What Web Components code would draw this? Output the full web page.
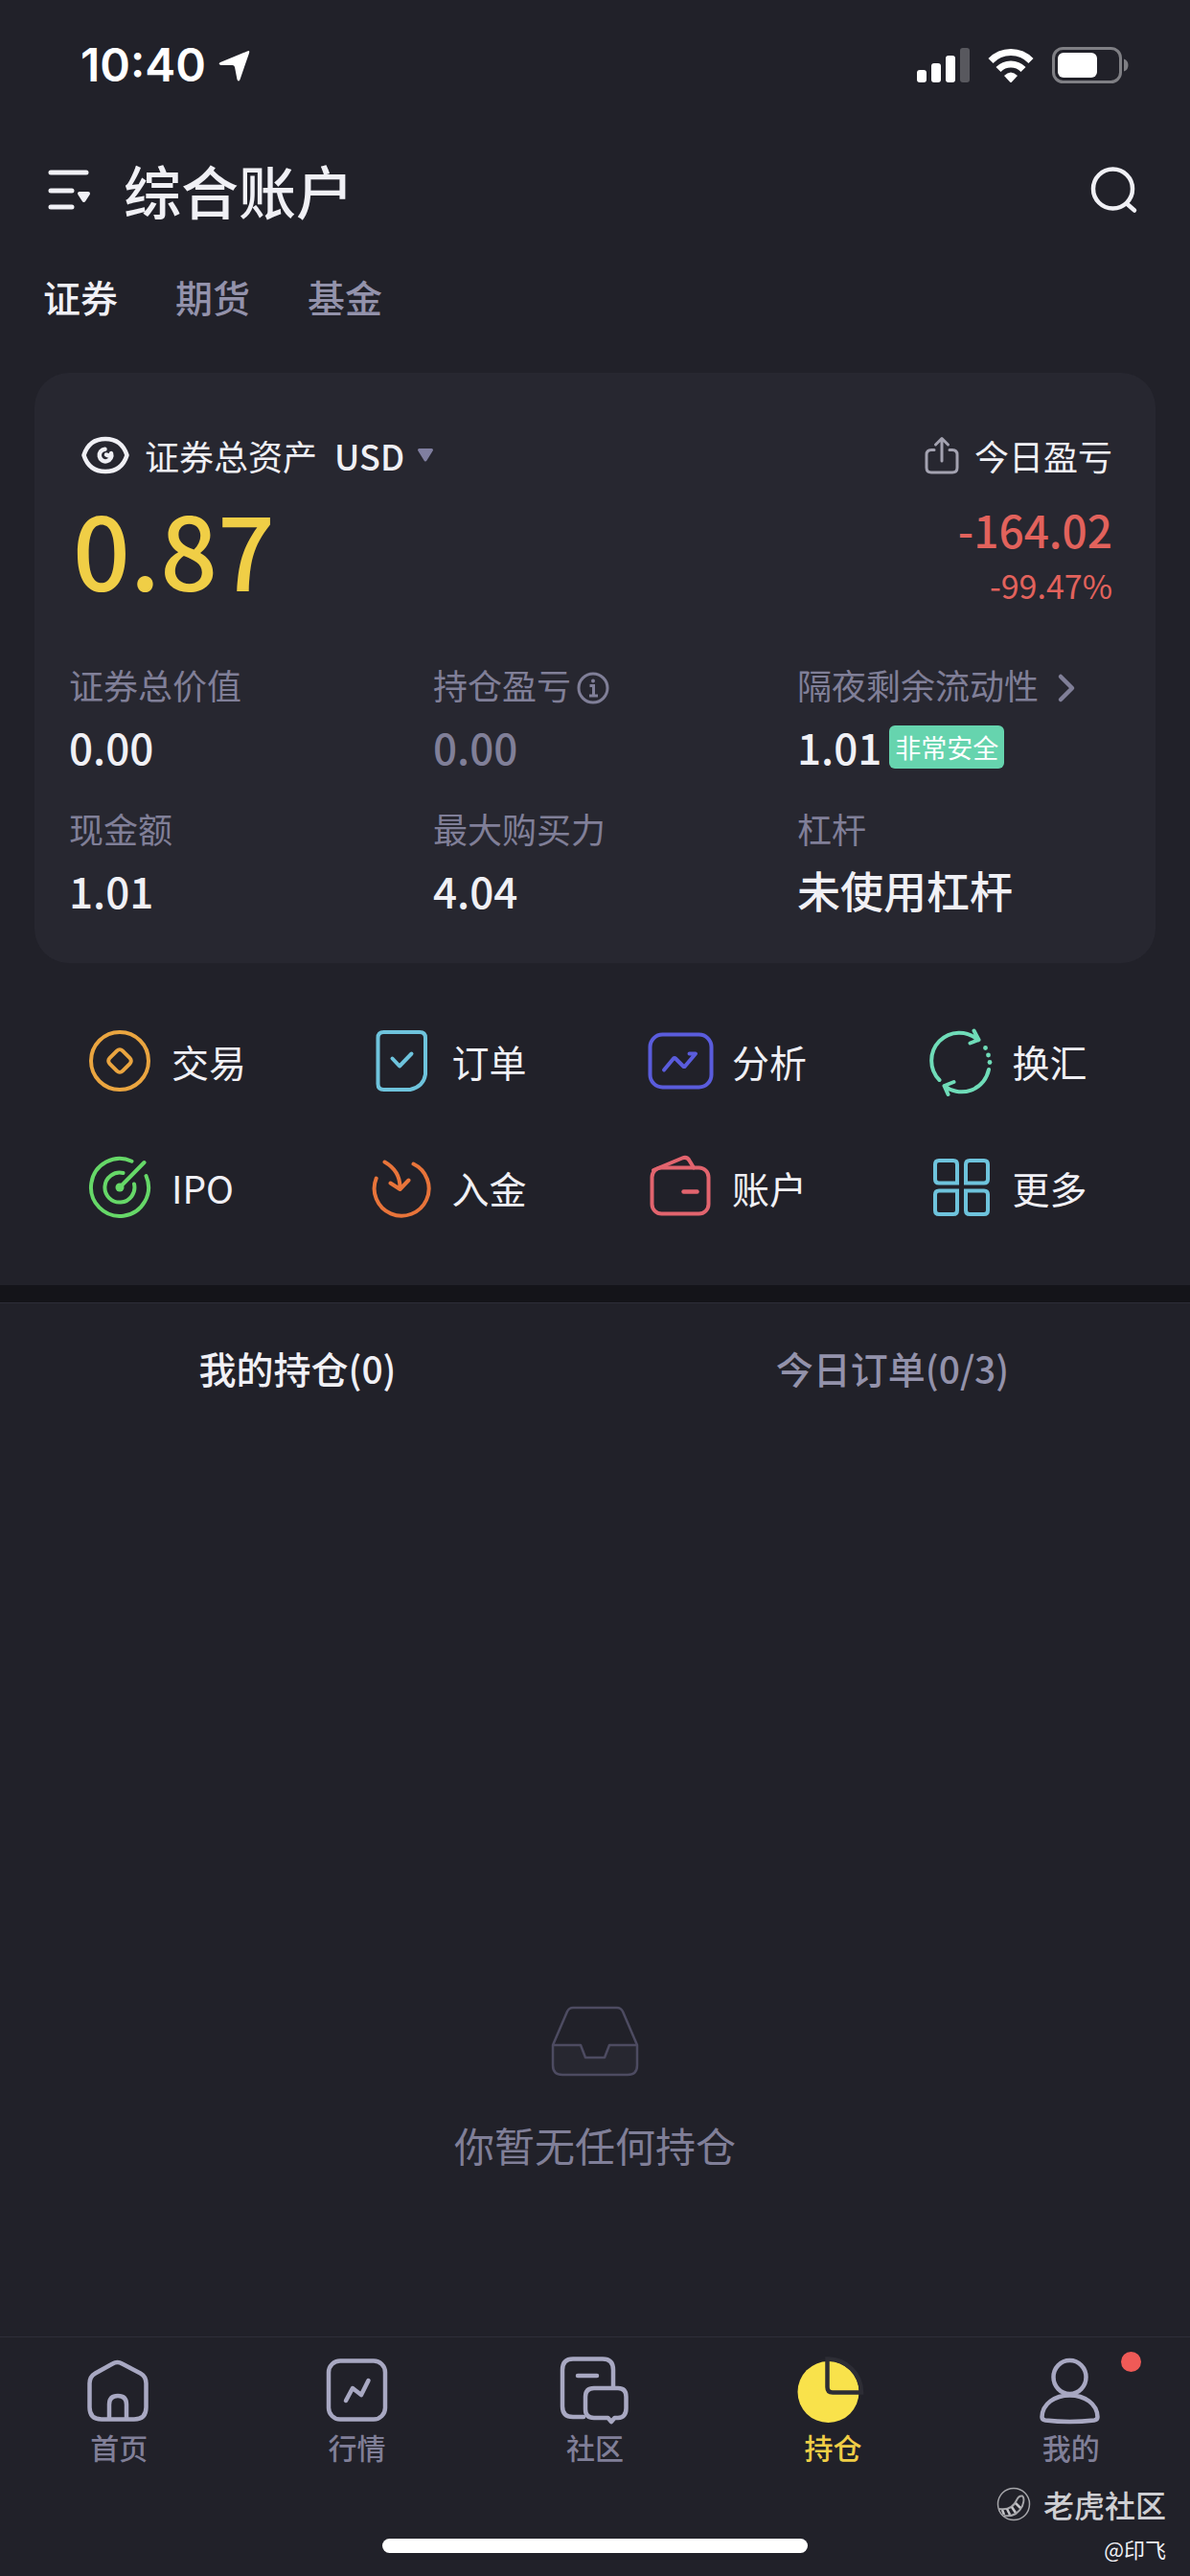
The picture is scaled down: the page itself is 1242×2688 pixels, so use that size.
<!DOCTYPE html>
<html lang="zh-CN">
<head>
<meta charset="utf-8">
<meta name="viewport" content="width=device-width, initial-scale=1">
<title>综合账户</title>
<style>
  body {
    margin: 0;
    background: #212129;
    color: #f0f0f5;
    font-family: "Noto Sans CJK SC", sans-serif;
    --muted: #807f98;
    --tab: #9392ab;
    --card: #272730;
    --line: #2e2e38;
    --red: #e2625c;
    --yellow: #f0ce46;
  }
</style>
</head>
<body>
<app-shell></app-shell>

<script>
const RESET = `
  * { box-sizing: border-box; }
  button, select { margin: 0; padding: 0; border: 0; background: none; color: inherit; font: inherit; cursor: pointer; }
  a { color: inherit; text-decoration: none; }
  h1, p { margin: 0; font-weight: inherit; }
`;

/* name: [width, height, markup] */
const ICONS = {
  location: [33, 33, `<path d="M30 1.500Q33 0 32 3.500L22.500 31Q21 34 19.500 31L17 18Q16.500 16 14.500 16L2.500 16Q-1 14.500 2 13Z" fill="#fff"/>`],
  signal: [55, 36, `<g fill="#fff"><rect y="23" width="10" height="13" rx="3"/><rect x="15" y="16" width="10" height="20" rx="3"/><rect x="30" y="8" width="10" height="28" rx="3"/><rect x="45" width="10" height="36" rx="3" opacity=".25"/></g>`],
  wifi: [48, 36, `<g fill="none" stroke="#fff" stroke-width="7"><path d="M3 13.500A29 29 0 0 1 45 13.500"/><path d="M11 22.500A18 18 0 0 1 37 22.500"/></g><path d="M17 29Q24 22 31 29L25 35.500Q24 36.500 23 35.500Z" fill="#fff"/>`],
  battery: [80, 38, `<rect x="1.500" y="1.500" width="70" height="35" rx="10" fill="none" stroke="#7f7f84" stroke-width="3"/><rect x="6" y="6" width="41" height="26" rx="6" fill="#fff"/><path d="M75 12.500Q79.500 14 79.500 19Q79.500 24 75 25.500Z" fill="#7f7f84"/>`],
  menu: [45, 42, `<g stroke="#f0f0f5" stroke-width="5" stroke-linecap="round"><path d="M3 3H40M3 22H25M3 39H25"/></g><path d="M33 25H42L37.500 32Z" fill="#f0f0f5" stroke="#f0f0f5" stroke-width="4" stroke-linejoin="round"/>`],
  search: [50, 50, `<g fill="none" stroke="#f0f0f5" stroke-width="4.500" stroke-linecap="round"><circle cx="23.500" cy="24" r="20.500"/><path d="M38 39.500L46 46.500"/></g>`],
  eye: [50, 40, `<g fill="none" stroke="#f0f0f5"><path d="M2.500 20C6 9 14 3 25 3S44 9 47.500 20C44 31 36 37 25 37S6 31 2.500 20Z" stroke-width="4.500" stroke-linejoin="round"/><path d="M24.500 13.800A6.300 6.300 0 1 0 31 18Q31 22 26 19.500" stroke-width="4.500" stroke-linecap="round" stroke-linejoin="round"/></g>`],
  caret: [18, 16, `<path d="M2.500 2.500H15.500L9 13Z" fill="#807fa0" stroke="#807fa0" stroke-width="3" stroke-linejoin="round"/>`],
  share: [36, 40, `<g fill="none" stroke="#a3a2b0" stroke-width="3" stroke-linecap="round" stroke-linejoin="round"><path d="M10 14.500H7Q2 14.500 2 19.500V33Q2 38 7 38H29Q34 38 34 33V19.500Q34 14.500 29 14.500H26M18 26V3M11.500 9L18 2.500L24.500 9"/></g>`],
  info: [34, 34, `<circle cx="17" cy="17" r="15" fill="none" stroke="#807f98" stroke-width="3"/><path d="M13.500 14.500H17.500V25M13 25H22" fill="none" stroke="#807f98" stroke-width="3"/><circle cx="17" cy="9.500" r="2" fill="#807f98"/>`],
  chevron: [18, 30, `<path d="M3 3L15 15L3 27" fill="none" stroke="#807f98" stroke-width="4.500" stroke-linecap="round" stroke-linejoin="round"/>`],

  trade: [72, 72, `<g fill="none" stroke="#eaa540" stroke-width="4"><circle cx="36" cy="36" r="30"/><rect x="26.500" y="26.500" width="19" height="19" rx="4" transform="rotate(45 36 36)"/></g>`],
  order: [72, 72, `<g fill="none" stroke="#6ec3dc" stroke-width="4" stroke-linecap="round" stroke-linejoin="round"><path d="M18.500 6H56Q62 6 62 12V50Q60 63 46 66H18.500Q12.500 66 12.500 60V12Q12.500 6 18.500 6Z"/><path d="M27.500 33.500L35 41.500L47.500 28.500"/></g>`],
  analysis: [72, 72, `<g fill="none" stroke="#5a5cdc" stroke-width="4" stroke-linecap="round" stroke-linejoin="round"><rect x="4.500" y="8.500" width="64" height="55" rx="13"/><path d="M19 45.500L29 33.500Q30 32.500 31 33.500L39 41.500Q40 42.500 41 41.500L52 28.500H45.500"/></g>`],
  exchange: [72, 72, `<g fill="none" stroke="#6fdcb8" stroke-width="4" stroke-linecap="round" stroke-linejoin="round"><path d="M13.500 56A29 29 0 0 1 54 14.500M49.500 4.500L54.500 14L45.500 17.500M65 45A29 29 0 0 1 18.500 62M28.500 58L18.500 62L22.500 71"/></g><g fill="#6fdcb8"><circle cx="61.500" cy="22.500" r="2.400"/><circle cx="64.500" cy="30" r="2.400"/><circle cx="66" cy="37.500" r="2.400"/></g>`],
  ipo: [72, 72, `<g fill="none" stroke="#66d868" stroke-width="4" stroke-linecap="round"><path d="M48.500 8.700A30 30 0 1 0 63.500 24M39.500 21A15.500 15.500 0 1 0 51 32.500M36 36L61.500 10"/></g><circle cx="36" cy="36" r="4.500" fill="#66d868"/>`],
  deposit: [72, 72, `<g fill="none" stroke="#e8743a" stroke-width="4" stroke-linecap="round" stroke-linejoin="round"><path d="M10.700 26.500A28.500 28.500 0 1 0 49.500 11.500M19.500 9.500Q36 19 35.500 37M25.500 31.500L35.500 38L44.500 28.500"/></g>`],
  account: [72, 72, `<g fill="none" stroke="#e2646e" stroke-width="4" stroke-linecap="round" stroke-linejoin="round"><rect x="6.500" y="15.500" width="59" height="48" rx="10"/><path d="M8 18L38 5.500Q43 3.500 45.500 8L50 15.500"/><path d="M39.500 40.500H53.500" stroke-width="4.500"/></g>`],
  more: [72, 72, `<g fill="none" stroke="#6ec3dc" stroke-width="4"><path d="M32 31.500H13Q9 31.500 9 27.500V12Q9 8 13 8H28Q32 8 32 12ZM41 31.500V12Q41 8 45 8H60Q64 8 64 12V27.500Q64 31.500 60 31.500ZM32 39.500V60Q32 64 28 64H13Q9 64 9 60V43.500Q9 39.500 13 39.500ZM41 39.500H60Q64 39.500 64 43.500V60Q64 64 60 64H45Q41 64 41 60Z"/></g>`],

  empty: [92, 74, `<path d="M2 41H31L36 54H56L61 41H90V62Q90 72 81 72H11Q2 72 2 62Z" fill="#272730"/><g fill="none" stroke="#4d4b61" stroke-width="2.500" stroke-linejoin="round"><path d="M2 41L17 6Q19 2 23 2H69Q73 2 75 6L90 41V62Q90 72 80 72H12Q2 72 2 62Z"/><path d="M2 41H31L36 54H56L61 41H90"/></g>`],

  home: [78, 78, `<g fill="none" stroke="#a8a8c2" stroke-width="4.500" stroke-linejoin="round"><path d="M32.500 10.500Q37.500 7.500 42.500 10.500L61.500 20.500Q67.500 24 67.500 31V56Q67.500 68.500 55 68.500H21Q8.500 68.500 8.500 56V31Q8.500 24 14.500 20.500Z"/><path d="M29 68V53Q29 44 38 44T47 53V68"/></g>`],
  market: [78, 78, `<g fill="none" stroke="#a8a8c2" stroke-width="4.500" stroke-linecap="round" stroke-linejoin="round"><rect x="9" y="7.500" width="59" height="61" rx="12"/><path d="M27 49L34 36L43 43L50.500 28"/></g>`],
  community: [78, 78, `<g fill="none" stroke="#a8a8c2" stroke-width="4.500" stroke-linecap="round" stroke-linejoin="round"><path d="M27 66H16Q5 66 5 55V17Q5 5.500 16 5.500H47Q58 5.500 58 17V34M21 23H41"/><path d="M38 36H63Q71.500 36 71.500 45V57Q71.500 66.500 63 67H59.500L56 71L52.500 67H38Q29 67 29 58V45Q29 36 38 36Z"/></g>`],
  portfolio: [78, 78, `<circle cx="34.500" cy="40" r="32" fill="#f9e24b"/><path d="M33.500 5.500A35 35 0 0 1 69 40.500H39Q33.500 40.500 33.500 35Z" fill="none" stroke="#2d2d35" stroke-width="4.500"/>`],
  me: [78, 78, `<g fill="none" stroke="#a8a8c2" stroke-width="4.500" stroke-linejoin="round"><ellipse cx="37.500" cy="24.500" rx="17" ry="17.500"/><path d="M8.500 66C9 52 22 43.500 37.500 43.500S66 52 66.500 66Q66.500 69 63 69.500Q37.500 72.500 12 69.500Q8.500 69 8.500 66Z"/></g>`],
  tiger: [36, 36, `<g fill="none" stroke="#a5a5a9" stroke-width="1.500"><circle cx="18" cy="18" r="16.500"/><path d="M3 23Q16 25 21 14Q23 9 27 9.500Q30 12 27 20Q21 32 8 30" stroke-width="2"/></g><path d="M6 24L8 29M11 23L14 29M16 21L20 27M20 17L25 22" stroke="#c4c4c8" stroke-width="2.500"/>`]
};

function define(name, html) {
  const template = document.createElement('template');
  template.innerHTML = `<style>${RESET}</style>` + html;
  customElements.define(name, class extends HTMLElement {
    constructor() {
      super();
      this.attachShadow({ mode: 'open' }).append(template.content.cloneNode(true));
    }
  });
}

customElements.define('ui-icon', class extends HTMLElement {
  connectedCallback() {
    if (this.shadowRoot) return;
    const [w, h, art] = ICONS[this.getAttribute('name')];
    this.attachShadow({ mode: 'open' }).innerHTML =
      `<style>:host{display:block;flex:none}svg{display:block;overflow:visible}</style>
       <svg width="${w}" height="${h}" viewBox="0 0 ${w} ${h}" aria-hidden="true">${art}</svg>`;
  }
});

define('status-bar', `
  <style>
    :host { display: flex; justify-content: space-between; align-items: center; height: 136px; padding: 0 64px 0 84px; color: #fff; }
    .time, .system { display: flex; align-items: center; }
    .time { gap: 13px; font: 600 48px/56px Inter, sans-serif; }
    .system { gap: 19px; }
  </style>
  <div class="time"><span>10:40</span><ui-icon name="location"></ui-icon></div>
  <div class="system"><ui-icon name="signal"></ui-icon><ui-icon name="wifi"></ui-icon><ui-icon name="battery"></ui-icon></div>
`);

define('account-header', `
  <style>
    :host { display: block; }
    .bar { display: flex; align-items: center; gap: 34px; height: 124px; padding: 0 54px 0 50px; }
    h1 { flex: 1; font-size: 60px; line-height: 84px; font-weight: 500; }
    nav { display: flex; gap: 60px; padding: 0 45px; }
    nav button { height: 98px; font-size: 39px; line-height: 54px; font-weight: 500; color: var(--tab); }
    nav button[aria-selected="true"] { color: #f0f0f5; }
  </style>
  <div class="bar">
    <button aria-label="菜单"><ui-icon name="menu"></ui-icon></button>
    <h1>综合账户</h1>
    <button aria-label="搜索"><ui-icon name="search"></ui-icon></button>
  </div>
  <nav role="tablist">
    <button role="tab" aria-selected="true">证券</button>
    <button role="tab" aria-selected="false">期货</button>
    <button role="tab" aria-selected="false">基金</button>
  </nav>
`);

define('metric-item', `
  <style>
    :host { display: block; }
    .label, .value { display: flex; align-items: center; white-space: nowrap; }
    .label { height: 60px; gap: 6px; font-size: 36px; line-height: 60px; color: var(--muted); }
    .label ::slotted(ui-icon) { margin-top: 8px; }
    .value { height: 70px; gap: 8px; font-size: 44px; line-height: 70px; font-weight: 500; color: var(--value, #f0f0f5); }
  </style>
  <div class="label"><slot name="label"></slot></div>
  <div class="value"><slot></slot></div>
`);

define('safety-badge', `
  <style>
    :host { display: block; padding: 0 6px; border-radius: 6px; background: #66d4ae; color: #fff; font-size: 27px; line-height: 45px; font-weight: 400; }
  </style>
  <slot></slot>
`);

define('asset-card', `
  <style>
    :host { display: block; margin: 31px 36px 0; padding: 50px 0 41px; border-radius: 36px; background: var(--card); }
    .summary { display: flex; justify-content: space-between; padding: 0 45px 0 40px; }
    .head { display: flex; align-items: center; height: 72px; font-size: 36px; line-height: 72px; }
    .left .head { padding-left: 9px; }
    .head button { margin-right: 16px; }
    .right .head { justify-content: flex-end; }
    .currency { display: flex; align-items: center; gap: 12px; margin-left: 18px; font-weight: 500; }
    select { appearance: none; height: 72px; }
    .total { font-size: 105px; line-height: 120px; font-weight: 500; color: var(--yellow); }
    .right { text-align: right; color: var(--red); }
    .right .head { color: #f0f0f5; }
    .day { font-size: 46px; line-height: 82px; font-weight: 500; }
    .pct { font-size: 34px; line-height: 36px; }
    .metrics { display: grid; grid-template-columns: 380fr 380fr 374fr; row-gap: 20px; margin-top: 53px; padding-left: 36px; }
    .dim { --value: var(--muted); }
    .go { margin-left: 14px; }
    .words { font-size: 45px; }
  </style>
  <div class="summary">
    <div class="left">
      <div class="head">
        <button aria-label="隐藏金额"><ui-icon name="eye"></ui-icon></button>
        <label for="currency">证券总资产</label>
        <span class="currency"><select id="currency"><option>USD</option></select><ui-icon name="caret"></ui-icon></span>
      </div>
      <p class="total">0.87</p>
    </div>
    <div class="right">
      <div class="head"><button aria-label="分享"><ui-icon name="share"></ui-icon></button><span>今日盈亏</span></div>
      <p class="day">-164.02</p>
      <p class="pct">-99.47%</p>
    </div>
  </div>
  <div class="metrics">
    <metric-item><span slot="label">证券总价值</span>0.00</metric-item>
    <metric-item class="dim"><span slot="label">持仓盈亏</span><ui-icon slot="label" name="info"></ui-icon>0.00</metric-item>
    <metric-item><span slot="label">隔夜剩余流动性</span><ui-icon class="go" slot="label" name="chevron"></ui-icon><span>1.01</span><safety-badge>非常安全</safety-badge></metric-item>
    <metric-item><span slot="label">现金额</span>1.01</metric-item>
    <metric-item><span slot="label">最大购买力</span>4.04</metric-item>
    <metric-item><span slot="label">杠杆</span><span class="words">未使用杠杆</span></metric-item>
  </div>
`);

define('quick-action', `
  <style>
    :host { display: block; }
    button { display: flex; align-items: center; gap: 18px; width: 100%; height: 132px; padding-left: 53px; font-size: 39px; line-height: 54px; }
  </style>
  <button><slot name="icon"></slot><span><slot></slot></span></button>
`);

define('quick-actions', `
  <style>
    :host { display: grid; grid-template-columns: repeat(4, 1fr); padding: 36px; border-bottom: 18px solid #141419; }
  </style>
  <quick-action><ui-icon slot="icon" name="trade"></ui-icon>交易</quick-action>
  <quick-action><ui-icon slot="icon" name="order"></ui-icon>订单</quick-action>
  <quick-action><ui-icon slot="icon" name="analysis"></ui-icon>分析</quick-action>
  <quick-action><ui-icon slot="icon" name="exchange"></ui-icon>换汇</quick-action>
  <quick-action><ui-icon slot="icon" name="ipo"></ui-icon>IPO</quick-action>
  <quick-action><ui-icon slot="icon" name="deposit"></ui-icon>入金</quick-action>
  <quick-action><ui-icon slot="icon" name="account"></ui-icon>账户</quick-action>
  <quick-action><ui-icon slot="icon" name="more"></ui-icon>更多</quick-action>
`);

define('holdings-panel', `
  <style>
    :host { flex: 1; display: flex; flex-direction: column; border-top: 1px solid var(--line); }
    .tabs { display: grid; grid-template-columns: 1fr 1fr; }
    .tabs button { height: 134px; font-size: 39px; line-height: 54px; font-weight: 500; color: var(--tab); }
    .tabs button[aria-selected="true"] { color: #f0f0f5; }
    .empty { flex: 1; display: flex; flex-direction: column; justify-content: flex-end; align-items: center; gap: 41px; padding-bottom: 170px; font-size: 42px; line-height: 60px; color: var(--muted); }
  </style>
  <div class="tabs" role="tablist">
    <button role="tab" aria-selected="true">我的持仓(0)</button>
    <button role="tab" aria-selected="false">今日订单(0/3)</button>
  </div>
  <div class="empty"><ui-icon name="empty"></ui-icon><p>你暂无任何持仓</p></div>
`);

define('nav-item', `
  <style>
    :host { position: relative; display: block; flex: 1; color: var(--muted); }
    :host([active]) { color: var(--yellow); }
    a { display: flex; flex-direction: column; align-items: center; font-size: 30px; line-height: 38px; font-weight: 500; }
    :host([dot])::after { content: ""; position: absolute; top: -2px; right: 51px; width: 21px; height: 21px; border-radius: 50%; background: #f05a57; }
  </style>
  <a href="#"><slot name="icon"></slot><span><slot></slot></span></a>
`);

define('bottom-nav', `
  <style>
    :host { position: relative; display: flex; flex-direction: column; justify-content: space-between; height: 250px; padding: 17px 0 24px; border-top: 1px solid var(--line); }
    nav { display: flex; }
    .indicator { align-self: center; width: 444px; height: 15px; border-radius: 8px; background: #fff; }
    .mark { position: absolute; right: 25px; bottom: 5px; text-align: right; color: #f0f0f5; }
    .brand { display: flex; align-items: center; gap: 13px; font-size: 32px; line-height: 44px; font-weight: 500; color: #cfcfd3; }
    .user { font-size: 22px; line-height: 48px; }
  </style>
  <nav>
    <nav-item><ui-icon slot="icon" name="home"></ui-icon>首页</nav-item>
    <nav-item><ui-icon slot="icon" name="market"></ui-icon>行情</nav-item>
    <nav-item><ui-icon slot="icon" name="community"></ui-icon>社区</nav-item>
    <nav-item active><ui-icon slot="icon" name="portfolio"></ui-icon>持仓</nav-item>
    <nav-item dot><ui-icon slot="icon" name="me"></ui-icon>我的</nav-item>
  </nav>
  <div class="indicator"></div>
  <div class="mark">
    <div class="brand"><ui-icon name="tiger"></ui-icon><span>老虎社区</span></div>
    <div class="user">@印飞</div>
  </div>
`);

define('app-shell', `
  <style>
    :host { display: flex; flex-direction: column; min-height: 100vh; }
  </style>
  <status-bar></status-bar>
  <account-header></account-header>
  <asset-card></asset-card>
  <quick-actions></quick-actions>
  <holdings-panel></holdings-panel>
  <bottom-nav></bottom-nav>
`);
</script>
</body>
</html>
